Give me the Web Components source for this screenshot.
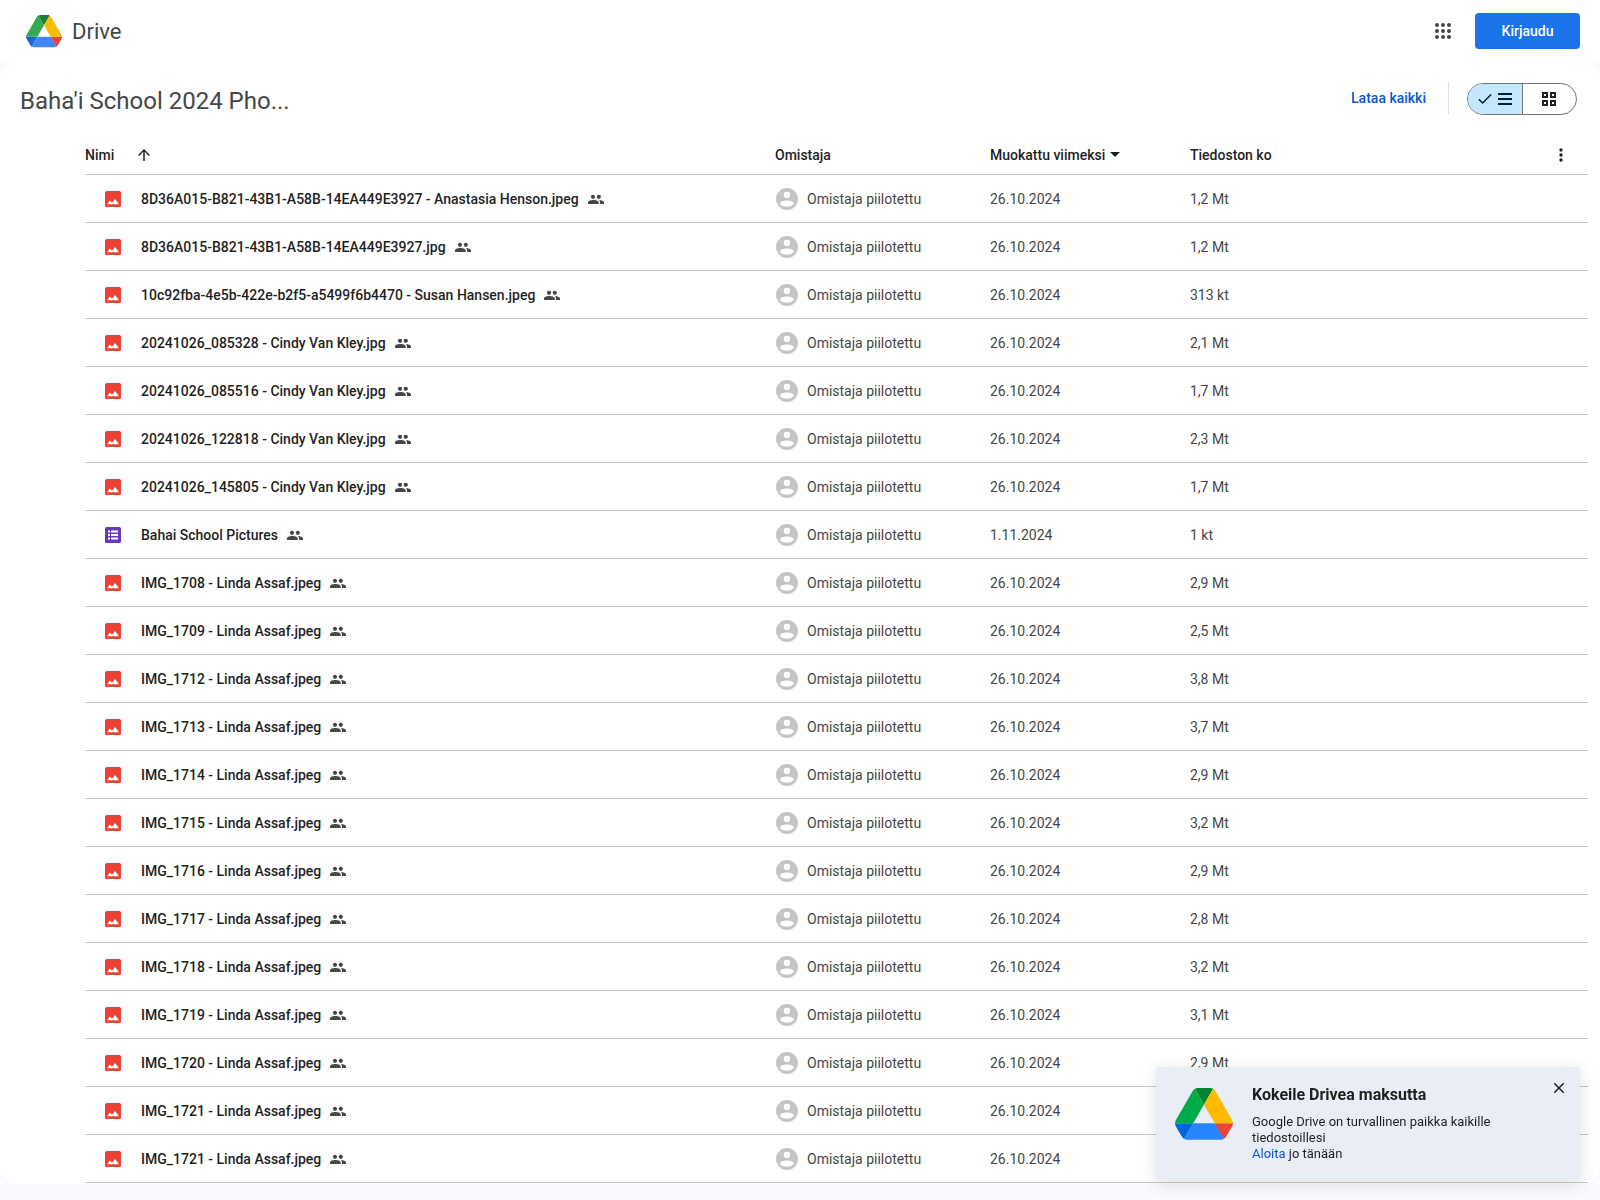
<!DOCTYPE html>
<html lang="fi">
<head>
<meta charset="utf-8">
<meta name="viewport" content="width=device-width, initial-scale=1">
<title>Drive</title>
<style>
  body {
    margin: 0;
    background: #f9faff;
    color: #1f1f1f;
    font-family: Roboto, "Liberation Sans", sans-serif;
    font-size: 14px;
    line-height: 20px;
  }
</style>
</head>
<body>
<drive-app></drive-app>

<script>
const ICONS = {
  apps: ['0 0 24 24', '<path d="M6 8a2 2 0 1 0 0-4 2 2 0 0 0 0 4zm6 12a2 2 0 1 0 0-4 2 2 0 0 0 0 4zm-6 0a2 2 0 1 0 0-4 2 2 0 0 0 0 4zm0-6a2 2 0 1 0 0-4 2 2 0 0 0 0 4zm6 0a2 2 0 1 0 0-4 2 2 0 0 0 0 4zm4-8a2 2 0 1 0 4 0 2 2 0 0 0-4 0zm-4 2a2 2 0 1 0 0-4 2 2 0 0 0 0 4zm6 6a2 2 0 1 0 0-4 2 2 0 0 0 0 4zm0 6a2 2 0 1 0 0-4 2 2 0 0 0 0 4z"/>'],
  check: ['0 0 18 18', '<path d="M6.6 14.1 2.3 9.8l1.1-1.1 3.2 3.2 8-8 1.1 1.1z"/>'],
  list: ['0 0 18 18', '<path d="M2 3h14v2H2zM2 8h14v2H2zM2 13h14v2H2z"/>'],
  grid: ['0 0 18 18', '<path fill-rule="evenodd" d="M2 2h6v6H2zM4 4v2h2V4zM10 2h6v6h-6zM12 4v2h2V4zM2 10h6v6H2zM4 12v2h2v-2zM10 10h6v6h-6zM12 12v2h2v-2z"/>'],
  up: ['0 0 24 24', '<path d="m4 12 1.41 1.41L11 7.83V20h2V7.83l5.58 5.59L20 12l-8-8-8 8z"/>'],
  caret: ['0 0 10 5', '<path d="M0 0h10L5 5z"/>'],
  more: ['0 0 24 24', '<path d="M12 8a2 2 0 1 0 0-4 2 2 0 0 0 0 4zm0 2a2 2 0 1 0 0 4 2 2 0 0 0 0-4zm0 6a2 2 0 1 0 0 4 2 2 0 0 0 0-4z"/>'],
  close: ['0 0 24 24', '<path d="M19 6.41 17.59 5 12 10.59 6.41 5 5 6.41 10.59 12 5 17.59 6.41 19 12 13.41 17.59 19 19 17.59 13.41 12z"/>'],
  image: ['0 0 16 16', '<rect width="16" height="16" rx="1.6" fill="#ea4335"/><path fill="#fff" d="M2.2 13.3 4.9 9.3l1.5 2 1 .2L10.2 8l3.7 5.3z"/>'],
  form: ['0 0 16 16', '<rect width="16" height="16" rx="1.6" fill="#673ab7"/><path fill="#fff" d="M3 3.5h2v2H3zM6 3.5h7v2H6zM3 7h2v2H3zM6 7h7v2H6zM3 10.5h2v2H3zM6 10.5h7v2H6z"/>'],
  people: ['0 0 16 16', '<circle cx="5" cy="5.8" r="2.1"/><circle cx="10.8" cy="5.8" r="2.1"/><path d="M0 13v-1.6C0 9.8 3.2 9 5.3 9s5.4.8 5.4 2.4V13zM11 9.1c2.1.1 5 .9 5 2.4V13h-3.9v-1.6c0-.9-.4-1.7-1.1-2.3z"/>'],
  avatar: ['0 0 22 22', '<circle cx="11" cy="11" r="11" fill="#c4c4c4"/><circle cx="11" cy="7" r="3.2" fill="#fff"/><ellipse cx="11" cy="15.6" rx="6.8" ry="3.2" fill="#fff"/>']
};

class DriveIcon extends HTMLElement {
  connectedCallback() {
    const [box, shape] = ICONS[this.getAttribute('name')];
    this.attachShadow({ mode: 'open' }).innerHTML = `
      <style>
        :host { display: inline-block; flex: none; width: 16px; height: 16px; }
        svg { display: block; width: 100%; height: 100%; fill: currentColor; }
      </style>
      <svg viewBox="${box}" aria-hidden="true">${shape}</svg>`;
  }
}

class DriveLogo extends HTMLElement {
  connectedCallback() {
    this.attachShadow({ mode: 'open' }).innerHTML = `
      <style>
        :host { display: block; flex: none; width: 36px; }
        svg { display: block; width: 100%; }
        .a { fill: #0066da } .b { fill: #00ac47 } .c { fill: #ea4335 }
        .d { fill: #00832d } .e { fill: #2684fc } .f { fill: #ffba00 }
        :host([muted]) .a { fill: #1967d2 } :host([muted]) .b { fill: #34a853 }
        :host([muted]) .d { fill: #188038 } :host([muted]) .e { fill: #4285f4 }
        :host([muted]) .f { fill: #fbbc04 }
      </style>
      <svg viewBox="0 0 87.3 78" aria-hidden="true">
        <path class="a" d="m6.6 66.85 3.85 6.65c.8 1.4 1.95 2.5 3.3 3.3l13.75-23.8h-27.5c0 1.55.4 3.1 1.2 4.5z"/>
        <path class="b" d="m43.65 25-13.75-23.8c-1.35.8-2.5 1.9-3.3 3.3l-25.4 44a9.06 9.06 0 0 0-1.2 4.5h27.5z"/>
        <path class="c" d="m73.55 76.8c1.35-.8 2.5-1.9 3.3-3.3l1.6-2.75 7.65-13.25c.8-1.4 1.2-2.95 1.2-4.5h-27.5l5.85 11.5z"/>
        <path class="d" d="m43.65 25 13.75-23.8c-1.35-.8-2.9-1.2-4.5-1.2h-18.5c-1.6 0-3.15.45-4.5 1.2z"/>
        <path class="e" d="m59.8 53h-32.3l-13.75 23.8c1.35.8 2.9 1.2 4.5 1.2h50.8c1.6 0 3.15-.45 4.5-1.2z"/>
        <path class="f" d="m73.4 26.5-12.7-22c-.8-1.4-1.95-2.5-3.3-3.3l-13.75 23.8 16.15 28h27.45c0-1.55-.4-3.1-1.2-4.5z"/>
      </svg>`;
  }
}

class DriveHeader extends HTMLElement {
  connectedCallback() {
    this.attachShadow({ mode: 'open' }).innerHTML = `
      <style>
        :host { display: block; background: #fff; }
        header { display: flex; align-items: center; justify-content: space-between; height: 63px; padding: 0 20px 0 26px; box-sizing: border-box; }
        .brand { display: flex; align-items: center; gap: 10px; color: #444746; font-size: 22px; line-height: 28px; text-decoration: none; }
        nav { display: flex; align-items: center; gap: 12px; padding-bottom: 2px; }
        button { display: flex; border: 0; padding: 8px; background: none; color: #444746; }
        button drive-icon { width: 24px; height: 24px; }
        .sign-in { display: block; box-sizing: border-box; min-width: 105px; padding: 8px 24px; border-radius: 4px; background: #1a73e8; color: #fff; font-weight: 500; text-align: center; text-decoration: none; }
      </style>
      <header>
        <a class="brand" href="#"><drive-logo muted></drive-logo><span>Drive</span></a>
        <nav>
          <button type="button" aria-label="Google-sovellukset"><drive-icon name="apps"></drive-icon></button>
          <a class="sign-in" href="#">Kirjaudu</a>
        </nav>
      </header>`;
  }
}

class DriveToolbar extends HTMLElement {
  connectedCallback() {
    this.attachShadow({ mode: 'open' }).innerHTML = `
      <style>
        :host { display: flex; align-items: center; justify-content: space-between; height: 70px; padding: 0 23px 0 20px; }
        h1 { margin: 0; padding-top: 5px; color: #444746; font-size: 24px; line-height: 32px; font-weight: 400; }
        .actions { display: flex; align-items: center; }
        .download { border: 0; padding: 6px 22px; background: none; color: #0b57d0; font: inherit; font-weight: 500; }
        .divider { width: 1px; height: 32px; margin-right: 18px; background: #d9e0ec; }
        .views { display: flex; box-sizing: border-box; width: 110px; height: 32px; margin-top: 2px; border: 1px solid #747775; border-radius: 16px; overflow: hidden; }
        .views button { display: flex; flex: 1; align-items: center; justify-content: center; gap: 2px; border: 0; padding: 0; background: none; color: #1f1f1f; }
        .views button[aria-pressed="true"] { background: #c2e7ff; color: #001d35; border-right: 1px solid #747775; }
        .views drive-icon { width: 18px; height: 18px; }
      </style>
      <h1><slot></slot></h1>
      <div class="actions">
        <button class="download" type="button">Lataa kaikki</button>
        <span class="divider"></span>
        <div class="views" role="group" aria-label="Näkymä">
          <button type="button" aria-pressed="true" aria-label="Luettelo"><drive-icon name="check"></drive-icon><drive-icon name="list"></drive-icon></button>
          <button type="button" aria-pressed="false" aria-label="Ruudukko"><drive-icon name="grid"></drive-icon></button>
        </div>
      </div>`;
  }
}

const D = '26.10.2024';
const FILES = [
  ['8D36A015-B821-43B1-A58B-14EA449E3927 - Anastasia Henson.jpeg', D, '1,2 Mt'],
  ['8D36A015-B821-43B1-A58B-14EA449E3927.jpg', D, '1,2 Mt'],
  ['10c92fba-4e5b-422e-b2f5-a5499f6b4470 - Susan Hansen.jpeg', D, '313 kt'],
  ['20241026_085328 - Cindy Van Kley.jpg', D, '2,1 Mt'],
  ['20241026_085516 - Cindy Van Kley.jpg', D, '1,7 Mt'],
  ['20241026_122818 - Cindy Van Kley.jpg', D, '2,3 Mt'],
  ['20241026_145805 - Cindy Van Kley.jpg', D, '1,7 Mt'],
  ['Bahai School Pictures', '1.11.2024', '1 kt', 'form'],
  ['IMG_1708 - Linda Assaf.jpeg', D, '2,9 Mt'],
  ['IMG_1709 - Linda Assaf.jpeg', D, '2,5 Mt'],
  ['IMG_1712 - Linda Assaf.jpeg', D, '3,8 Mt'],
  ['IMG_1713 - Linda Assaf.jpeg', D, '3,7 Mt'],
  ['IMG_1714 - Linda Assaf.jpeg', D, '2,9 Mt'],
  ['IMG_1715 - Linda Assaf.jpeg', D, '3,2 Mt'],
  ['IMG_1716 - Linda Assaf.jpeg', D, '2,9 Mt'],
  ['IMG_1717 - Linda Assaf.jpeg', D, '2,8 Mt'],
  ['IMG_1718 - Linda Assaf.jpeg', D, '3,2 Mt'],
  ['IMG_1719 - Linda Assaf.jpeg', D, '3,1 Mt'],
  ['IMG_1720 - Linda Assaf.jpeg', D, '2,9 Mt'],
  ['IMG_1721 - Linda Assaf.jpeg', D, '2,9 Mt'],
  ['IMG_1721 - Linda Assaf.jpeg', D, '2,9 Mt']
];

class DriveFileTable extends HTMLElement {
  connectedCallback() {
    const rows = FILES.map(([name, date, size, type = 'image']) => `
      <tr>
        <td class="name"><div class="cell"><drive-icon name="${type}"></drive-icon><span class="label">${name}</span><drive-icon class="shared" name="people"></drive-icon></div></td>
        <td><div class="owner"><drive-icon name="avatar"></drive-icon><span>Omistaja piilotettu</span></div></td>
        <td>${date}</td>
        <td>${size}</td>
      </tr>`).join('');
    this.attachShadow({ mode: 'open' }).innerHTML = `
      <style>
        :host { display: block; padding: 0 12px 1px 85px; }
        table { width: 100%; table-layout: fixed; border-spacing: 0; }
        .c-owner { width: 215px; } .c-date { width: 200px; } .c-size { width: 398px; }
        th, td { box-sizing: border-box; padding: 0; border-bottom: 1px solid #c7c7c7; text-align: left; }
        th { height: 42px; padding-top: 2px; font-weight: 500; }
        td { height: 48px; color: #444746; }
        button { display: flex; align-items: center; border: 0; padding: 0; background: none; color: inherit; font: inherit; }
        .head { display: flex; align-items: center; gap: 21px; }
        .sort { gap: 5px; }
        .up { width: 18px; height: 18px; }
        .caret { width: 10px; height: 5px; }
        .last { justify-content: space-between; padding-right: 17px; }
        .more { width: 20px; height: 20px; }
        .cell { display: flex; align-items: center; padding-left: 20px; }
        .label { margin: 0 9px 0 20px; color: #1f1f1f; font-weight: 500; white-space: nowrap; }
        .shared { color: #444746; }
        .owner { display: flex; align-items: center; gap: 9px; padding-left: 1px; }
        .owner drive-icon { width: 22px; height: 22px; }
      </style>
      <table>
        <colgroup><col><col class="c-owner"><col class="c-date"><col class="c-size"></colgroup>
        <thead>
          <tr>
            <th scope="col"><div class="head"><button type="button">Nimi</button><button type="button" aria-label="Käännä järjestys"><drive-icon class="up" name="up"></drive-icon></button></div></th>
            <th scope="col">Omistaja</th>
            <th scope="col"><button class="sort" type="button">Muokattu viimeksi<drive-icon class="caret" name="caret"></drive-icon></button></th>
            <th scope="col"><div class="head last"><span>Tiedoston ko</span><button type="button" aria-label="Lisää"><drive-icon class="more" name="more"></drive-icon></button></div></th>
          </tr>
        </thead>
        <tbody>${rows}</tbody>
      </table>`;
  }
}

class DriveToast extends HTMLElement {
  connectedCallback() {
    this.attachShadow({ mode: 'open' }).innerHTML = `
      <style>
        :host { position: fixed; right: 20px; bottom: 20px; display: flex; align-items: flex-start; box-sizing: border-box; width: 424px; padding: 16px 12px 18px 19px; border-radius: 4px; background: #e9edf6; box-shadow: 0 4px 16px rgba(60, 64, 67, .16); font-size: 13px; line-height: 16px; }
        drive-logo { width: 58px; margin: 5px 19px 0 0; }
        .text { flex: 1; }
        h2 { margin: 0 0 7px; font-size: 16px; line-height: 24px; font-weight: 700; }
        p { margin: 0; max-width: 260px; }
        a { color: #0b57d0; text-decoration: none; }
        button { display: flex; border: 0; padding: 0; margin-top: -4px; background: none; color: #1f1f1f; }
        .close { width: 18px; height: 18px; }
      </style>
      <drive-logo></drive-logo>
      <div class="text">
        <h2>Kokeile Drivea maksutta</h2>
        <p>Google Drive on turvallinen paikka kaikille tiedostoillesi</p>
        <p><a href="#">Aloita</a> jo tänään</p>
      </div>
      <button type="button" aria-label="Sulje"><drive-icon class="close" name="close"></drive-icon></button>`;
  }
}

class DriveApp extends HTMLElement {
  connectedCallback() {
    this.attachShadow({ mode: 'open' }).innerHTML = `
      <style>
        :host { display: block; padding-bottom: 16px; }
        main { display: block; background: #fff; border-radius: 16px; }
      </style>
      <drive-header></drive-header>
      <main>
        <drive-toolbar>Baha'i School 2024 Pho...</drive-toolbar>
        <drive-file-table></drive-file-table>
      </main>
      <drive-toast></drive-toast>`;
  }
}

customElements.define('drive-icon', DriveIcon);
customElements.define('drive-logo', DriveLogo);
customElements.define('drive-header', DriveHeader);
customElements.define('drive-toolbar', DriveToolbar);
customElements.define('drive-file-table', DriveFileTable);
customElements.define('drive-toast', DriveToast);
customElements.define('drive-app', DriveApp);
</script>
</body>
</html>
